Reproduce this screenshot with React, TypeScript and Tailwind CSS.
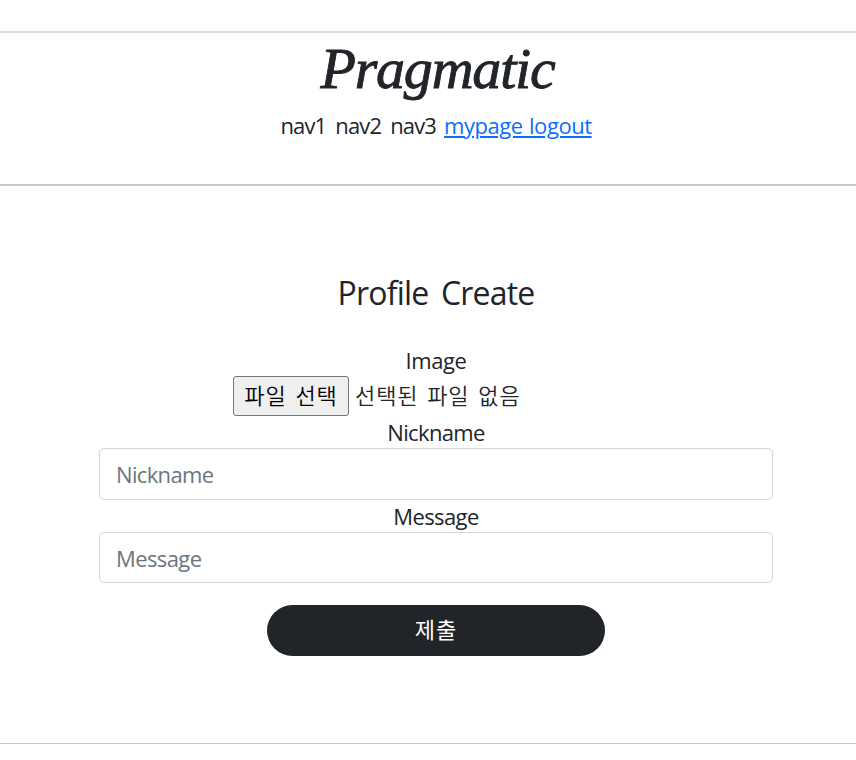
import React from "react";

const fields = [
  { label: "Nickname", box: "h-[52px]", text: "tracking-[-0.65px]" },
  { label: "Message", box: "h-[51px]", text: "tracking-[-0.6px]" },
];

export default function App() {
  return (
    <div className="h-[760px] w-full overflow-hidden bg-white pt-[31px] font-['Open_Sans','Noto_Sans_CJK_KR',sans-serif] text-[22px] leading-[34px] text-[#212529]">
      <header className="flex h-[155px] flex-col items-center border-y-2 border-t-[#dcdcdc] border-b-[#c8c8c8] pl-4">
        <h1 className="mt-[4px] h-[64px] pl-[3px] font-['Liberation_Serif',serif] text-[58px] leading-[64px] font-normal italic tracking-[-1.2px] [-webkit-text-stroke:0.9px_#212529]">
          Pragmatic
        </h1>
        <nav className="mt-[7px] flex gap-[9px] tracking-[-0.85px] whitespace-nowrap">
          <span>nav1</span>
          <span>nav2</span>
          <span>nav3</span>
          <span className="-ml-px tracking-[-0.45px] text-[#0d6efd] underline decoration-2 underline-offset-2 [word-spacing:1px]">
            mypage logout
          </span>
        </nav>
      </header>
      <main className="flex h-[558px] flex-col items-center border-b border-[#c8c8c8] pt-[86px] pl-4">
        <h4 className="text-[32px] leading-[41px] tracking-[-0.8px] [word-spacing:5px]">Profile Create</h4>
        <form className="mt-[31px] flex w-[674px] flex-col items-center">
          <label className="h-[32px] leading-[32px] tracking-[-0.4px]">Image</label>
          <div className="flex h-[40px] w-[406px] items-center gap-[6px] font-['Noto_Sans_CJK_KR',sans-serif] font-[350] whitespace-nowrap">
            <button type="button" className="h-[40px] w-[116px] rounded-[3px] border border-[#767676] bg-[#efefef] pb-[4px] tracking-[0.9px] text-black [word-spacing:3px]">
              파일 선택
            </button>
            <span className="pb-[4px] tracking-[0.9px] [word-spacing:3px]">선택된 파일 없음</span>
          </div>
          {fields.map((f) => (
            <React.Fragment key={f.label}>
              <label className={`${f.text} h-[32px] leading-[32px]`}>{f.label}</label>
              <input
                className={`${f.box} ${f.text} w-full rounded-[5px] border border-[#ced4da] px-[16px] placeholder:text-[#6c757d]`}
                placeholder={f.label}
              />
            </React.Fragment>
          ))}
          <button type="button" className="mt-[22px] h-[51px] w-[338px] rounded-full bg-[#212529] pb-[5px] font-['Noto_Sans_CJK_KR',sans-serif] font-normal tracking-[0.9px] text-white">
            제출
          </button>
        </form>
      </main>
    </div>
  );
}
